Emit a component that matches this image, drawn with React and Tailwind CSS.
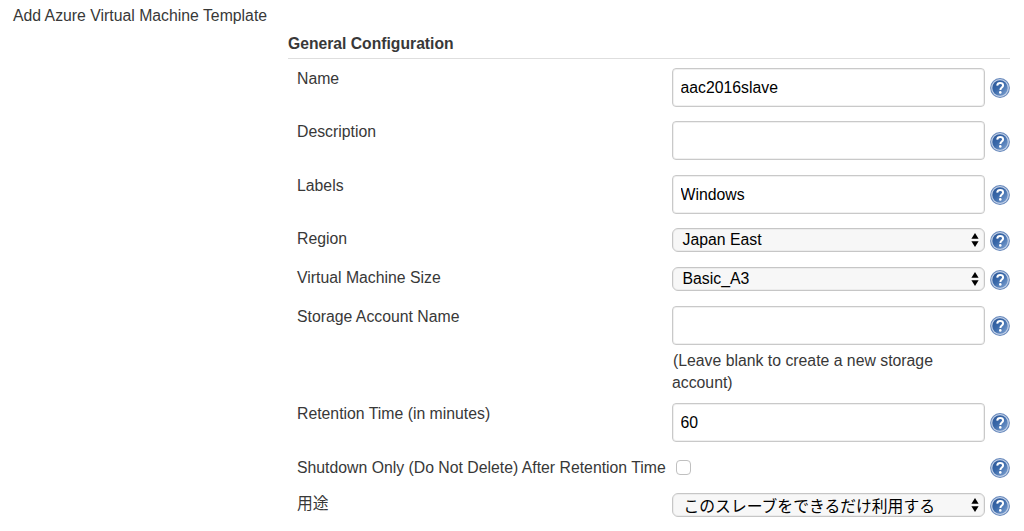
// src/App.jsx
import React from 'react';

// Round blue help icon at the end of every row
function HelpIcon({ className }) {
    return (
        <svg viewBox="0 0 20 20" className={`h-5 w-5 shrink-0 ${className}`} aria-label="Help">
            <defs>
                <linearGradient id="help-fill" x1="0" y1="0" x2="1" y2="1">
                    <stop offset="0" stopColor="#2a5596" />
                    <stop offset="0.45" stopColor="#3a69aa" />
                    <stop offset="1" stopColor="#83a5d3" />
                </linearGradient>
            </defs>
            <circle cx="10" cy="10" r="9.9" fill="#6587bb" />
            <circle cx="10" cy="10" r="8.9" fill="#c3d1e7" />
            <circle cx="10" cy="10" r="7.7" fill="url(#help-fill)" />
            <path
                d="M7.2 7.6C7.4 5.8 8.5 5 10.1 5C11.9 5 13.1 6 13.1 7.4C13.1 9.5 10.4 9.5 10.4 11.9"
                fill="none"
                stroke="#fff"
                strokeWidth="2"
            />
            <circle cx="10.3" cy="14.4" r="1.3" fill="#fff" />
        </svg>
    );
}

function TextField({ value = '', label }) {
    return (
        <input
            type="text"
            aria-label={label}
            defaultValue={value}
            className="block h-[39px] w-full rounded-[4px] border border-[#c9c9c9] bg-white px-[7.5px] pt-px text-black shadow-[inset_0_0_0_1px_#f0f0f0] outline-none"
        />
    );
}

function SelectField({ value, wide = false }) {
    return (
        <button
            type="button"
            className="flex h-[24px] w-full items-center justify-between rounded-[6px] border border-[#c6c6c6] bg-[#f7f7f7] pr-[5px] pl-[9.5px] text-left leading-[20px] text-black shadow-[inset_0_0_0_1px_#ececec]"
        >
            <span className={wide ? 'pt-[3px] pl-px' : ''}>{value}</span>
            <svg viewBox="0 0 8 14" className="h-[14px] w-2 shrink-0" fill="#000">
                <path d="M4 0L7.6 5.8H0.4Z" />
                <path d="M4 14L0.4 8.2H7.6Z" />
            </svg>
        </button>
    );
}

// Label on the left, control in the middle, help icon on the right
function Row({ label, height, iconOffset, children }) {
    return (
        <div className={`flex items-start pl-[9px] ${height}`}>
            <div className="w-[375px] shrink-0 pt-px leading-[20px] whitespace-nowrap">{label}</div>
            <div className="w-[313px] shrink-0">{children}</div>
            <HelpIcon className={`ml-[5px] ${iconOffset}`} />
        </div>
    );
}

export default function App() {
    return (
        <div className="h-[531px] w-full overflow-hidden bg-white font-['Liberation_Sans','Noto_Sans_CJK_JP',sans-serif] text-[15.8px] text-[#383838]">
            <div className="h-[34px] pt-[6px] pl-[13px] leading-[20px]">Add Azure Virtual Machine Template</div>

            <section className="ml-[288px] w-[722px]">
                <h2 className="h-[25px] border-b border-[#dedede] text-[15.7px] leading-[20px] font-bold">
                    General Configuration
                </h2>

                <div className="pt-[9px]">
                    <Row label="Name" height="h-[53px]" iconOffset="mt-[10px]">
                        <TextField label="Name" value="aac2016slave" />
                    </Row>
                    <Row label="Description" height="h-[54px]" iconOffset="mt-[11px]">
                        <TextField label="Description" />
                    </Row>
                    <Row label="Labels" height="h-[53px]" iconOffset="mt-[10px]">
                        <TextField label="Labels" value="Windows" />
                    </Row>
                    <Row label="Region" height="h-[39px]" iconOffset="mt-[3px]">
                        <SelectField value="Japan East" />
                    </Row>
                    <Row label="Virtual Machine Size" height="h-[39px]" iconOffset="mt-[3px]">
                        <SelectField value="Basic_A3" />
                    </Row>
                    <Row label="Storage Account Name" height="h-[97px]" iconOffset="mt-[10px]">
                        <TextField label="Storage Account Name" />
                        <p className="pt-[5px] indent-[1px] leading-[22px]">
                            (Leave blank to create a new storage
                            <br />
                            account)
                        </p>
                    </Row>
                    <Row label="Retention Time (in minutes)" height="h-[54px]" iconOffset="mt-[10px]">
                        <TextField label="Retention Time" value="60" />
                    </Row>
                    <Row label="Shutdown Only (Do Not Delete) After Retention Time" height="h-[36px]" iconOffset="mt-px">
                        <input
                            type="checkbox"
                            aria-label="Shutdown Only"
                            className="mt-[3px] ml-[4px] block h-[15px] w-[15px] appearance-none rounded-[4px] border border-[#c0c0c0] bg-white"
                        />
                    </Row>
                    <Row label="用途" height="h-[38px]" iconOffset="mt-[3px]">
                        <SelectField value="このスレーブをできるだけ利用する" wide />
                    </Row>
                </div>
            </section>
        </div>
    );
}
